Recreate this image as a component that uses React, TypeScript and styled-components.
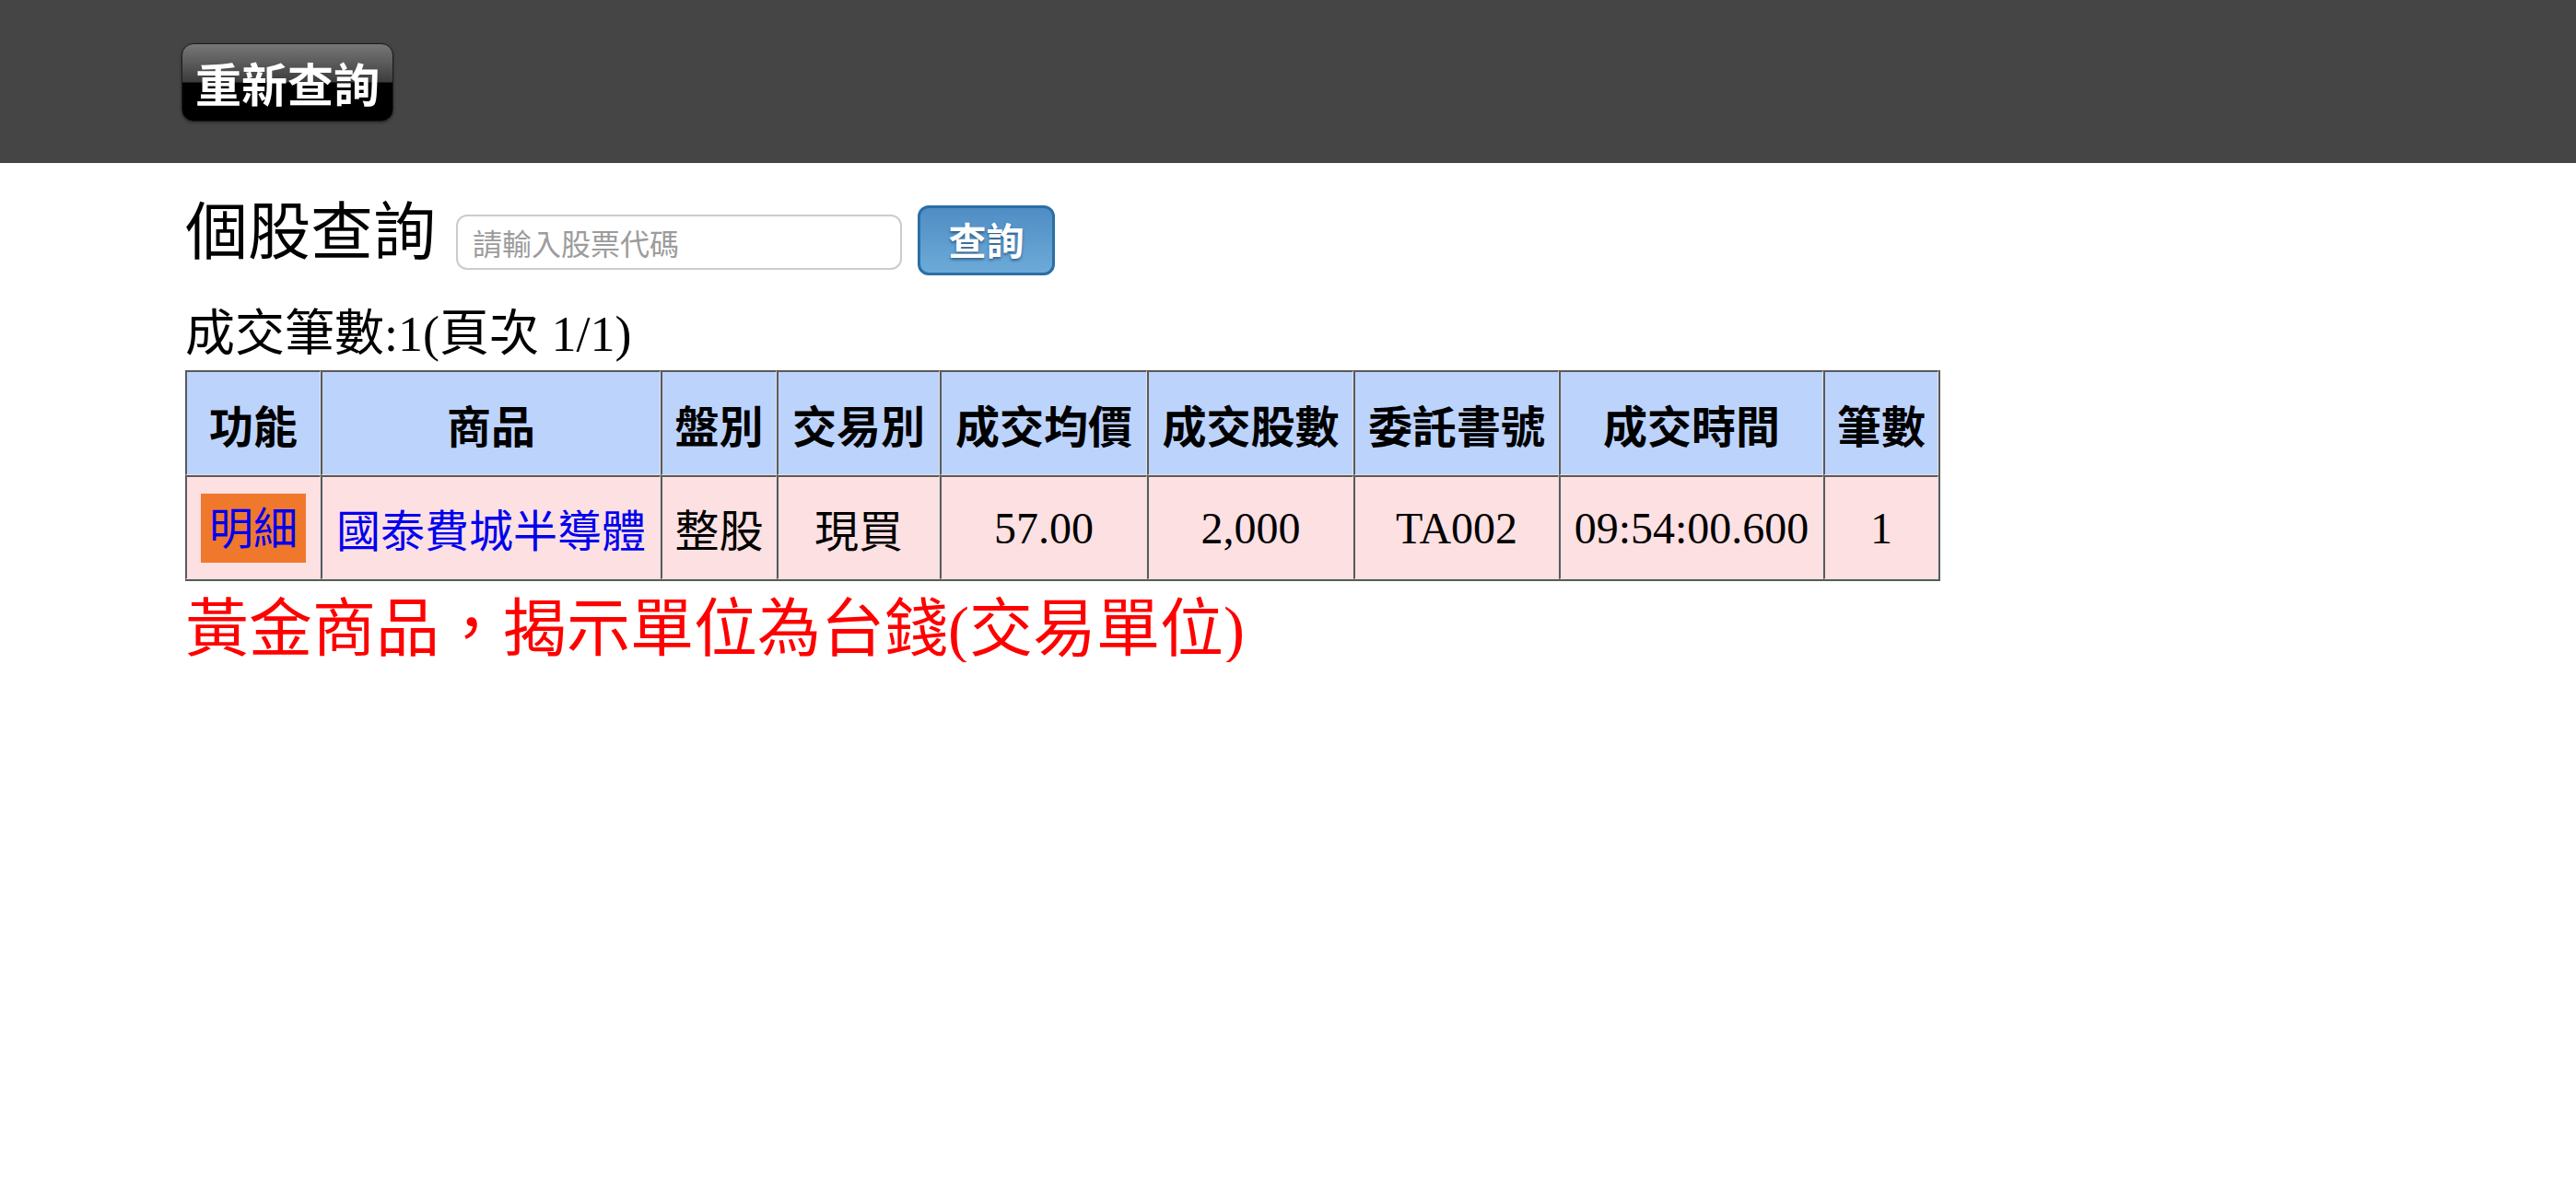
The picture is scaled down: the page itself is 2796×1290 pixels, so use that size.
import React from "react";
import styled, { createGlobalStyle } from "styled-components";

const Global = createGlobalStyle`
  html, body { margin: 0; padding: 0; background: #ffffff; }
  body { font-family: "Liberation Serif", "Noto Sans CJK TC", serif; color: #000; }
  * { box-sizing: border-box; }
`;

const TopBar = styled.header`
  height: 177px;
  background: #454545;
  padding: 47px 0 0 197px;
`;

const GlossButton = styled.button`
  width: 230px;
  height: 85px;
  border: 1px solid #1c1c1c;
  border-radius: 13px;
  background: linear-gradient(to bottom, #777777 0%, #5a5a5a 25%, #3c3c3c 49%, #000000 51%, #000000 100%);
  box-shadow: 0 1px 3px rgba(0, 0, 0, 0.45);
  color: #ffffff;
  font-family: "Noto Sans CJK TC", sans-serif;
  font-size: 50px;
  font-weight: 700;
  line-height: 1;
  padding: 0 0 2px;
  display: flex;
  align-items: center;
  justify-content: center;
  cursor: pointer;
`;

const Main = styled.main`
  padding: 0 0 0 201px;
`;

const SearchRow = styled.div`
  display: flex;
  align-items: flex-start;
  margin-top: 42px;
  height: 80px;
`;

const Heading = styled.h1`
  margin: 0;
  font-size: 68px;
  font-weight: 400;
  line-height: 68px;
  white-space: nowrap;
`;

const CodeInput = styled.input`
  margin: 14px 0 0 22px;
  width: 484px;
  height: 60px;
  border: 2px solid #cccccc;
  border-radius: 12px;
  padding: 0 16px;
  font-family: "Noto Sans CJK TC", sans-serif;
  font-size: 32px;
  color: #333;
  outline: none;
  &::placeholder { color: #9c9c9c; }
`;

const QueryButton = styled.button`
  margin: 4px 0 0 17px;
  width: 149px;
  height: 76px;
  border: 3px solid #2a6fa5;
  border-radius: 12px;
  background: linear-gradient(to bottom, #4f8dc4 0%, #6cabd8 100%);
  color: #ffffff;
  font-family: "Noto Sans CJK TC", sans-serif;
  font-size: 41px;
  font-weight: 700;
  line-height: 1;
  text-shadow: 0 2px 3px rgba(10, 40, 80, 0.55);
  padding: 0 0 4px;
  display: flex;
  align-items: center;
  justify-content: center;
  cursor: pointer;
`;

const CountLine = styled.div`
  margin-top: 37px;
  font-size: 54px;
  line-height: 54px;
  white-space: nowrap;
`;

const Table = styled.table`
  margin-top: 12px;
  width: 1905px;
  table-layout: fixed;
  border-collapse: separate;
  border-spacing: 0;
  border-right: 2px solid #5a5a5a;
  border-bottom: 2px solid #5a5a5a;
`;

const cellBase = `
  border-top: 2px solid #5a5a5a;
  border-left: 2px solid #5a5a5a;
  border-right: 1px solid #e2e2e2;
  border-bottom: 1px solid #e2e2e2;
  padding: 0;
  text-align: center;
  vertical-align: middle;
  font-size: 48px;
  white-space: nowrap;
`;

const HeadCell = styled.th`
  ${cellBase}
  height: 114px;
  background: #bcd3fc;
  font-weight: 700;
  color: #000;
`;

const Cell = styled.td`
  ${cellBase}
  height: 113px;
  background: #fde0e2;
  font-weight: 400;
  color: #000;
`;

const DetailLink = styled.a`
  display: inline-block;
  background: #f0782d;
  color: #0000ee;
  padding: 0 9px;
  height: 75px;
  line-height: 77px;
  text-decoration: none;
  vertical-align: middle;
  cursor: pointer;
`;

const ProductLink = styled.a`
  color: #0000ee;
  text-decoration: none;
  cursor: pointer;
`;

const Notice = styled.p`
  margin: 19px 0 0;
  font-size: 69px;
  line-height: 69px;
  color: #ff0000;
  white-space: nowrap;
`;

const columns = [147, 369, 126, 177, 225, 224, 223, 287, 125];
const headers = ["功能", "商品", "盤別", "交易別", "成交均價", "成交股數", "委託書號", "成交時間", "筆數"];

const trade = {
  product: "國泰費城半導體",
  board: "整股",
  side: "現買",
  price: "57.00",
  qty: "2,000",
  order: "TA002",
  time: "09:54:00.600",
  count: "1",
};

export default function App() {
  return (
    <>
      <Global />
      <TopBar>
        <GlossButton type="button">重新查詢</GlossButton>
      </TopBar>
      <Main>
        <SearchRow>
          <Heading>個股查詢</Heading>
          <CodeInput type="text" placeholder="請輸入股票代碼" />
          <QueryButton type="button">查詢</QueryButton>
        </SearchRow>
        <CountLine>成交筆數:1(頁次 1/1)</CountLine>
        <Table>
          <colgroup>
            {columns.map((w, i) => (
              <col key={i} style={{ width: w }} />
            ))}
          </colgroup>
          <thead>
            <tr>
              {headers.map((h) => (
                <HeadCell key={h}>{h}</HeadCell>
              ))}
            </tr>
          </thead>
          <tbody>
            <tr>
              <Cell>
                <DetailLink>明細</DetailLink>
              </Cell>
              <Cell>
                <ProductLink>{trade.product}</ProductLink>
              </Cell>
              <Cell>{trade.board}</Cell>
              <Cell>{trade.side}</Cell>
              <Cell>{trade.price}</Cell>
              <Cell>{trade.qty}</Cell>
              <Cell>{trade.order}</Cell>
              <Cell>{trade.time}</Cell>
              <Cell>{trade.count}</Cell>
            </tr>
          </tbody>
        </Table>
        <Notice>黃金商品，揭示單位為台錢(交易單位)</Notice>
      </Main>
    </>
  );
}
